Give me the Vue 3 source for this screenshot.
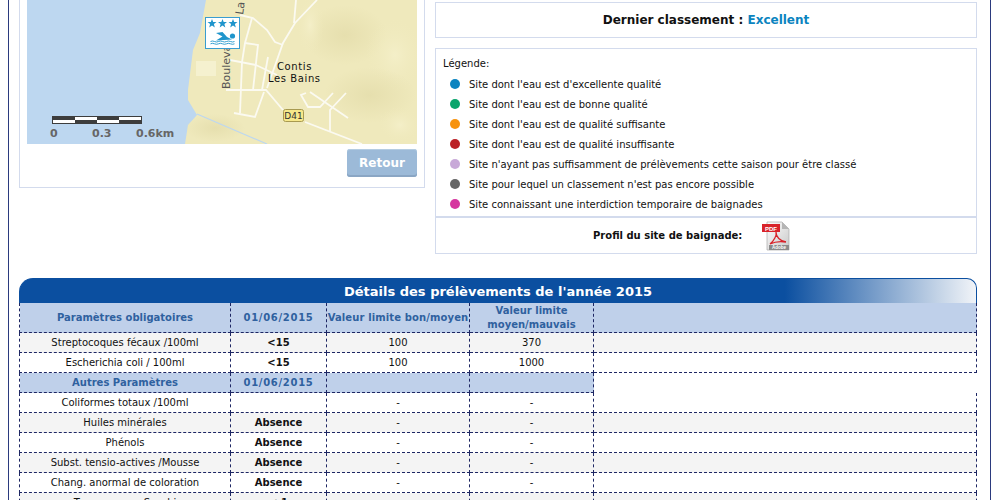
<script setup>
const legend = [
  { color: '#0b84c0', label: "Site dont l'eau est d'excellente qualité" },
  { color: '#0aa56c', label: "Site dont l'eau est de bonne qualité" },
  { color: '#f7930f', label: "Site dont l'eau est de qualité suffisante" },
  { color: '#bb2126', label: "Site dont l'eau est de qualité insuffisante" },
  { color: '#c8a9d8', label: "Site n'ayant pas suffisamment de prélèvements cette saison pour être classé" },
  { color: '#666666', label: "Site pour lequel un classement n'est pas encore possible" },
  { color: '#d6369f', label: 'Site connaissant une interdiction temporaire de baignades' }
]

const required = [
  { name: 'Streptocoques fécaux /100ml', value: '<15', good: '100', bad: '370', odd: true },
  { name: 'Escherichia coli / 100ml', value: '<15', good: '100', bad: '1000', odd: false }
]

const others = [
  { name: 'Coliformes totaux /100ml', value: '', good: '-', bad: '-', odd: false },
  { name: 'Huiles minérales', value: 'Absence', good: '-', bad: '-', odd: true },
  { name: 'Phénols', value: 'Absence', good: '-', bad: '-', odd: false },
  { name: 'Subst. tensio-actives /Mousse', value: 'Absence', good: '-', bad: '-', odd: true },
  { name: 'Chang. anormal de coloration', value: 'Absence', good: '-', bad: '-', odd: false },
  { name: 'Transparence Secchi', value: '< 1', good: '-', bad: '-', odd: true }
]

const roads = [
  'M317 0 L295 23 L283 43 L277 60 L267 88',
  'M296 0 L294 23',
  'M240 15 L253 18 L267 30 L275 42 L283 45',
  'M252 18 L245 43 L242 62 L240 113',
  'M245 43 L258 45 L253 90',
  'M230 60 L256 65 L277 75',
  'M268 57 L262 90',
  'M226 90 L266 90 L283 110',
  'M264 92 L255 117 L234 113',
  'M305 122 L362 144',
  'M310 92 L348 118',
  'M346 93 L330 110 L330 131',
  'M333 93 L320 107 L308 107 L301 95 L306 93'
]
</script>

<template>
  <div class="page">
    <div class="top">
      <div class="map-panel">
        <svg class="map" viewBox="27 0 390 144">
          <defs>
            <radialGradient id="hill" cx="50%" cy="50%" r="50%">
              <stop offset="0%" stop-color="#f4efc8" />
              <stop offset="100%" stop-color="#efe9bc" stop-opacity="0" />
            </radialGradient>
            <radialGradient id="shade" cx="50%" cy="50%" r="50%">
              <stop offset="0%" stop-color="#e6dfae" />
              <stop offset="100%" stop-color="#e6dfae" stop-opacity="0" />
            </radialGradient>
          </defs>
          <rect x="27" y="0" width="390" height="144" fill="#bdd7f0" />
          <path d="M206 0 L200 33 L193 50 L188 90 L188 100 L197 115 L188 125 L185 144 L417 144 L417 0 Z" fill="#efe9bc" />
          <ellipse cx="345" cy="35" rx="42" ry="30" fill="url(#shade)" />
          <ellipse cx="395" cy="55" rx="30" ry="38" fill="url(#hill)" />
          <ellipse cx="370" cy="95" rx="46" ry="28" fill="url(#shade)" />
          <ellipse cx="310" cy="25" rx="14" ry="30" fill="url(#hill)" />
          <ellipse cx="215" cy="128" rx="30" ry="14" fill="url(#shade)" />
          <ellipse cx="400" cy="125" rx="22" ry="18" fill="url(#hill)" />
          <rect x="196" y="61" width="20" height="15" fill="#f5f1cf" />
          <path d="M197 114 L267 144" fill="none" stroke="#bdd7f0" stroke-width="1.2" />
          <path v-for="road in roads" :key="road" :d="road" fill="none" stroke="#fbfaf1" stroke-width="1.8" />
          <text class="street" transform="translate(230 89) rotate(-90)">Boulevard</text>
          <text class="street" transform="translate(243 15) rotate(-82)">La</text>
          <text class="town" x="277" y="70">Contis</text>
          <text class="town" x="268" y="82">Les Bains</text>
          <rect x="283.500" y="109.500" width="20" height="12" rx="2" fill="#f6e88a" stroke="#a89a50" />
          <text class="road-no" x="293.500" y="119">D41</text>
          <rect x="205.500" y="17.500" width="34" height="31" fill="#fff" stroke="#3a9dd0" />
          <path v-for="x in [212, 222.500, 233]" :key="x" :transform="`translate(${x} 23.500)`" fill="#1f95cc" d="M0 -4.600 L1.200 -1.400 L4.500 -1.400 L1.900 0.600 L2.800 3.900 L0 2 L-2.800 3.900 L-1.900 0.600 L-4.500 -1.400 L-1.200 -1.400 Z" />
          <circle cx="232.500" cy="36" r="2.600" fill="#1f95cc" />
          <path d="M216 33 L222.500 32 L227 37 L232 39.500 L216 40.500 L222.500 36.500 Z" fill="#1f95cc" />
          <path d="M210.500 41.500 q2 -1 4 0 t4 0 t4 0 t4 0 t4 0 t4 0 M210.500 43.800 q2 -1 4 0 t4 0 t4 0 t4 0 t4 0 t4 0" fill="none" stroke="#1f95cc" stroke-width="0.9" />
          <rect x="52.500" y="116.500" width="89" height="7" fill="#fff" stroke="#3d3d3d" />
          <rect x="52" y="116" width="23" height="4" fill="#3d3d3d" />
          <rect x="75" y="120" width="22" height="4" fill="#3d3d3d" />
          <rect x="97" y="116" width="22" height="4" fill="#3d3d3d" />
          <rect x="119" y="120" width="23" height="4" fill="#3d3d3d" />
          <text class="scale" x="50" y="137">0</text>
          <text class="scale" x="92" y="137">0.3</text>
          <text class="scale" x="136" y="137">0.6km</text>
        </svg>
        <div class="map-actions">
          <button class="back-button">Retour</button>
        </div>
      </div>

      <div class="side">
        <div class="box ranking">Dernier classement : <span class="excellent">Excellent</span></div>
        <div class="box legend">
          <div class="legend-title">Légende:</div>
          <div v-for="item in legend" :key="item.label" class="legend-row">
            <span class="dot" :style="{ background: item.color }"></span>
            <span>{{ item.label }}</span>
          </div>
        </div>
        <div class="box profile">
          <span>Profil du site de baignade:</span>
          <svg class="pdf" viewBox="0 0 28 30">
            <defs>
              <linearGradient id="paper" x1="0" y1="0" x2="1" y2="1">
                <stop offset="0%" stop-color="#fdfdfd" />
                <stop offset="100%" stop-color="#c9c9c9" />
              </linearGradient>
            </defs>
            <path d="M5 1 L20 1 L27 8 L27 29 L5 29 Z" fill="url(#paper)" stroke="#a9a9a9" stroke-width="0.7" />
            <path d="M20 1 L20 8 L27 8 Z" fill="#b5b5b5" />
            <rect x="0" y="3" width="18" height="8" fill="#d8232a" />
            <text class="pdf-label" x="9" y="9.500">PDF</text>
            <path d="M8 23 C12 20 15 14 14 11 C14 16 18 20 24 21 C18 20 12 21 8 23 Z" fill="none" stroke="#d8232a" stroke-width="1.300" />
            <rect x="7" y="24" width="20" height="5" fill="#8b8b8b" />
            <text class="adobe-label" x="17" y="28.200">Adobe</text>
          </svg>
        </div>
      </div>
    </div>

    <div class="details">
      <div class="details-title">Détails des prélèvements de l'année 2015</div>
      <table class="samples">
        <colgroup>
          <col class="col-name" />
          <col class="col-date" />
          <col class="col-good" />
          <col class="col-bad" />
          <col />
        </colgroup>
        <tbody>
          <tr class="head first-head">
            <th>Paramètres obligatoires</th>
            <th class="date">01/06/2015</th>
            <th class="tight">Valeur limite bon/moyen</th>
            <th>Valeur limite<br />moyen/mauvais</th>
            <th></th>
          </tr>
          <tr v-for="row in required" :key="row.name" :class="{ odd: row.odd }">
            <td>{{ row.name }}</td>
            <td class="value">{{ row.value }}</td>
            <td>{{ row.good }}</td>
            <td>{{ row.bad }}</td>
            <td></td>
          </tr>
          <tr class="head">
            <th>Autres Paramètres</th>
            <th class="date">01/06/2015</th>
            <th></th>
            <th></th>
          </tr>
          <tr v-for="(row, i) in others" :key="row.name" :class="{ odd: row.odd, 'after-sub': i === 0 }">
            <td>{{ row.name }}</td>
            <td class="value">{{ row.value }}</td>
            <td>{{ row.good }}</td>
            <td>{{ row.bad }}</td>
            <td></td>
          </tr>
        </tbody>
      </table>
    </div>
  </div>
</template>

<style>
html, body {
  margin: 0;
  background: #fff;
  overflow: hidden;
}
</style>

<style scoped>
.page {
  box-sizing: border-box;
  width: 983px;
  height: 500px;
  margin-left: 8px;
  padding: 0 10px;
  border-left: 1px solid #2b3a7e;
  border-right: 1px solid #2b3a7e;
  overflow: hidden;
  font-family: "DejaVu Sans", Verdana, sans-serif;
  font-size: 10px;
  color: #111;
}

.top {
  display: flex;
  gap: 10px;
  height: 278px;
}

.map-panel {
  box-sizing: border-box;
  width: 406px;
  height: 188px;
  padding: 0 7px;
  border: 1px solid #d3dbed;
  border-top: 0;
}

.map {
  display: block;
  width: 390px;
  height: 144px;
}

.map-actions {
  display: flex;
  justify-content: flex-end;
  margin-top: 5px;
}

.back-button {
  width: 70px;
  height: 28px;
  padding: 0;
  border: 0;
  border-radius: 3px;
  background: #9cbad8;
  box-shadow: inset 0 -2px 0 #8aa6c4, inset 0 1px 0 #b4cce2;
  color: #fff;
  font-family: inherit;
  font-size: 12px;
  font-weight: bold;
}

.side {
  width: 542px;
  padding-top: 2px;
}

.box {
  box-sizing: border-box;
  border: 1px solid #d3dbed;
}

.ranking {
  height: 36px;
  line-height: 35px;
  text-align: center;
  font-size: 12px;
  font-weight: bold;
}

.excellent {
  color: #0b84c0;
}

.legend {
  height: 169px;
  margin-top: 10px;
  padding: 9px 7px 0;
}

.legend-title {
  line-height: 12px;
  margin-bottom: 4px;
}

.legend-row {
  display: flex;
  align-items: center;
  height: 20px;
  padding-left: 7px;
}

.dot {
  flex: none;
  width: 10px;
  height: 10px;
  margin-right: 9px;
  border-radius: 50%;
}

.profile {
  display: flex;
  align-items: center;
  height: 37px;
  padding-left: 157px;
  font-weight: bold;
}

.pdf {
  width: 28px;
  height: 30px;
  margin-left: 20px;
}

.details {
  width: 958px;
}

.details-title {
  box-sizing: border-box;
  height: 25px;
  line-height: 25px;
  border-radius: 14px 10px 0 0;
  border: 1px solid #0b4fa0;
  border-bottom: 0;
  background: linear-gradient(90deg, #0b4fa0 0, #0b4fa0 80%, #f1f4f8 100%);
  color: #fff;
  text-align: center;
  font-size: 13px;
  font-weight: bold;
}

.samples {
  width: 958px;
  table-layout: fixed;
  border-collapse: collapse;
}

.col-name { width: 211px; }
.col-date { width: 96px; }
.col-good { width: 143px; }
.col-bad { width: 124px; }

.samples th,
.samples td {
  height: 19px;
  padding: 0;
  border: 1px dashed #1d2663;
  text-align: center;
  line-height: 14px;
}

.samples th {
  color: #2f619f;
  font-weight: bold;
}

.head {
  background: #bfd0ea;
}

.samples .first-head th {
  height: 29px;
  border-top: 0;
}

.samples .after-sub td:last-child {
  border-top: 0;
}

.date {
  letter-spacing: 0.7px;
}

.tight {
  white-space: nowrap;
  letter-spacing: 0.12px;
}

.odd {
  background: #f4f4f4;
}

.value {
  font-weight: bold;
}

.street {
  font-size: 11px;
  fill: #555;
  font-family: "DejaVu Sans", sans-serif;
}

.town {
  font-size: 10px;
  letter-spacing: 0.6px;
  fill: #111;
  font-family: "DejaVu Sans", sans-serif;
}

.road-no {
  font-size: 9px;
  fill: #333;
  text-anchor: middle;
  font-family: "DejaVu Sans", sans-serif;
}

.scale {
  font-size: 11px;
  font-weight: bold;
  fill: #666;
  font-family: "DejaVu Sans", sans-serif;
}

.pdf-label {
  font-size: 6px;
  font-weight: bold;
  fill: #fff;
  text-anchor: middle;
  font-family: "Liberation Sans", sans-serif;
}

.adobe-label {
  font-size: 4.500px;
  fill: #fff;
  text-anchor: middle;
  font-family: "Liberation Sans", sans-serif;
}
</style>
